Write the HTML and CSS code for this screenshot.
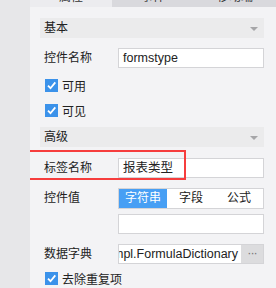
FILE: index.html
```html
<!DOCTYPE html>
<html lang="zh">
  <head>
    <meta charset="UTF-8" />
    <title>控件属性</title>
    <link rel="stylesheet" href="styles.css">
  </head>
  <body>
    <div class="side"></div>
    <div class="panel">
      <div class="tabs">
        <div class="tab active">属性</div>
        <div class="tab">事件</div>
        <div class="tab">移动端</div>
      </div>

      <div class="content">
        <!-- 基本 -->
        <div class="group-head">基本<span class="caret"></span></div>

        <div class="row first">
          <div class="label">控件名称</div>
          <div class="input">formstype</div>
        </div>

        <div class="check-row top">
          <span class="check"><svg viewBox="0 0 13 13"><path d="M3 6.6l2.5 2.6L10.3 3.4" /></svg></span>可用
        </div>
        <div class="check-row">
          <span class="check"><svg viewBox="0 0 13 13"><path d="M3 6.6l2.5 2.6L10.3 3.4" /></svg></span>可见
        </div>

        <!-- 高级 -->
        <div class="group-head second">高级<span class="caret"></span></div>

        <div class="row marked">
          <div class="label">标签名称</div>
          <div class="input">报表类型</div>
          <div class="mark"></div>
        </div>

        <div class="row">
          <div class="label">控件值</div>
          <div class="stack">
            <div class="segs">
              <div class="seg on">字符串</div>
              <div class="seg">字段</div>
              <div class="seg">公式</div>
            </div>
            <div class="input"></div>
          </div>
        </div>

        <div class="row">
          <div class="label">数据字典</div>
          <div class="input picker">
            <div class="picker-text"><span>impl.FormulaDictionary</span></div>
            <div class="more">···</div>
          </div>
        </div>

        <div class="check-row last">
          <span class="check"><svg viewBox="0 0 13 13"><path d="M3 6.6l2.5 2.6L10.3 3.4" /></svg></span>去除重复项
        </div>
      </div>
    </div>
  </body>
</html>
```

FILE: styles.css
```css
* {
  margin: 0;
  padding: 0;
  box-sizing: border-box;
}

body {
  width: 276px;
  height: 288px;
  overflow: hidden;
  display: flex;
  font-family: "Liberation Sans", "Noto Sans CJK SC", sans-serif;
  font-size: 12px;
  color: #222;
}

.side {
  width: 30px;
  background: #e7e7e9;
}

.panel {
  flex: 1;
  background: #f3f3f5;
  overflow: hidden;
}

.tabs {
  display: flex;
  height: 20px;
  margin-top: -13px;
}

.tab {
  flex: 1;
  line-height: 20px;
  text-align: center;
  background: #d9d9dd;
  color: #333;
}

.tab.active {
  background: #ececef;
}

.content {
  padding: 11px 12px 0 10px;
}

.group-head {
  position: relative;
  height: 20px;
  line-height: 20px;
  padding-left: 4px;
  background: #ebebec;
}

.group-head.second {
  margin-top: 4px;
}

.caret {
  position: absolute;
  right: 6px;
  top: 9px;
  border-left: 4px solid transparent;
  border-right: 4px solid transparent;
  border-top: 4px solid #a6a6a8;
}

.row {
  display: flex;
  margin-top: 10px;
  position: relative;
}

.row.marked {
  margin-top: 11px;
}

.label {
  width: 78px;
  padding-left: 4px;
  line-height: 20px;
}

.input {
  width: 146px;
  height: 20px;
  line-height: 18px;
  padding: 0 4px;
  background: #fff;
  border: 1px solid #d4d4d7;
  font-size: 12.5px;
  white-space: nowrap;
  overflow: hidden;
}

.mark {
  position: absolute;
  z-index: 1;
  left: -14px;
  top: -8px;
  width: 160px;
  height: 30px;
  border: 2px solid #f63d3d;
}

.stack {
  display: flex;
  flex-direction: column;
  gap: 5px;
}

.segs {
  display: flex;
  width: 146px;
  height: 21px;
  background: #fff;
  border: 1px solid #d4d4d7;
}

.seg {
  flex: 1;
  text-align: center;
  line-height: 19px;
}

.seg.on {
  background: #479ff4;
  color: #fff;
}

.input.picker {
  display: flex;
  padding: 0;
}

.picker-text {
  flex: 1;
  display: flex;
  justify-content: flex-end;
  overflow: hidden;
  padding-right: 3px;
}

.more {
  width: 22px;
  background: #dcdcde;
  color: #777;
  text-align: center;
  line-height: 16px;
  letter-spacing: -1px;
}

.check-row {
  display: flex;
  align-items: center;
  height: 25px;
  padding-left: 5px;
}

.check-row.top {
  margin-top: 5px;
}

.check-row.last {
  margin-top: 4px;
  height: 21px;
}

.check {
  width: 13px;
  height: 13px;
  margin-right: 4px;
  background: #3b92ea;
  display: flex;
}

.check svg {
  width: 13px;
  height: 13px;
}

.check path {
  fill: none;
  stroke: #fff;
  stroke-width: 1.8;
}
```
